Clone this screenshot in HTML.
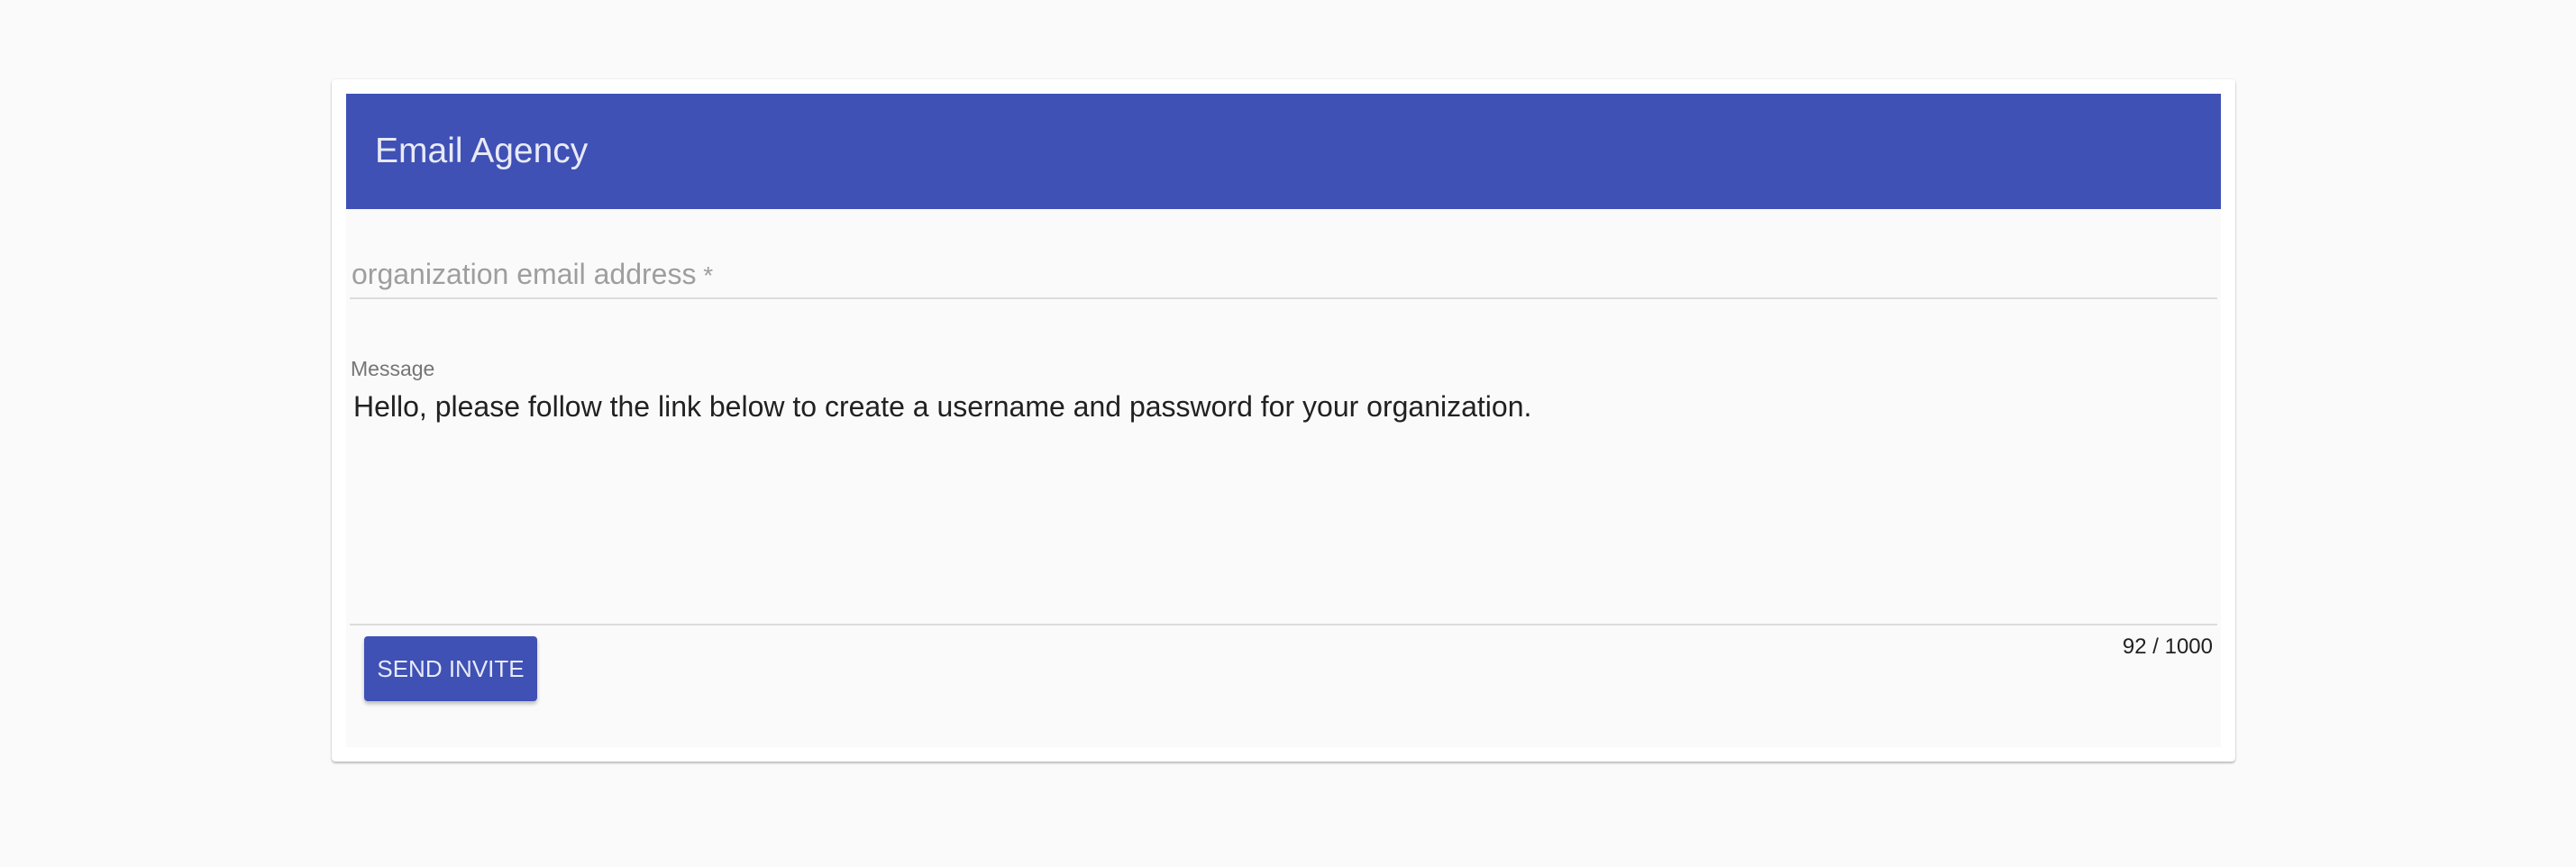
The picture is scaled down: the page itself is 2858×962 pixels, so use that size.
<!DOCTYPE html>
<html><head><meta charset="utf-8"><style>
html,body{margin:0;padding:0;width:2858px;height:962px;background:#fafafa;overflow:hidden;font-family:"Liberation Sans",Roboto,sans-serif;}
.card{position:absolute;left:368px;top:88px;width:2112px;height:757px;background:#fff;border-radius:4px;box-shadow:0 2px 2px rgba(0,0,0,.22),0 0 2px rgba(0,0,0,.12);}
.inner{position:absolute;left:384px;top:104px;width:2080px;height:725px;background:#fafafa;}
.hdr{position:absolute;left:384px;top:104px;width:2080px;height:128px;background:#3f51b5;}
.hdr span{position:absolute;left:32px;top:42px;font-size:39px;color:#e8eaf6;}
.t{position:absolute;white-space:nowrap;}
.line{position:absolute;height:2px;background:#dcdcdc;}
.btn{position:absolute;left:404px;top:706px;width:192px;height:72px;background:#3f51b5;border-radius:4px;box-shadow:0 3px 4px rgba(0,0,0,.25);color:#e8eaf6;font-size:26px;text-align:center;line-height:72px;}
</style></head><body>
<div class="card"></div>
<div class="inner"></div>
<div class="hdr"><span>Email Agency</span></div>
<div class="t" style="left:390px;top:286px;font-size:32px;color:#9e9e9e;">organization email address<span style="font-size:28px;"> *</span></div>
<div class="line" style="left:388px;top:330px;width:2072px;"></div>
<div class="t" style="left:389px;top:396px;font-size:23px;color:#757575;">Message</div>
<div class="t" style="left:392px;top:433px;font-size:32px;color:#212121;">Hello, please follow the link below to create a username and password for your organization.</div>
<div class="line" style="left:388px;top:692px;width:2072px;"></div>
<div class="btn">SEND INVITE</div>
<div class="t" style="right:403px;top:704px;font-size:24px;color:#212121;">92 / 1000</div>
</body></html>
